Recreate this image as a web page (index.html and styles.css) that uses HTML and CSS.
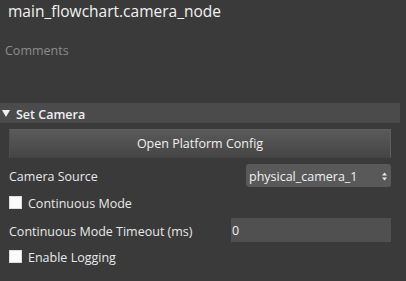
FILE: index.html
```html
<!DOCTYPE html>
<html>
<head>
<meta charset="utf-8">
<link rel="stylesheet" href="styles.css">
</head>
<body>
<div class="panel">
  <div class="title">main_flowchart.camera_node</div>
  <div class="comments">Comments</div>
  <div class="section-head"><span class="tri"></span><span class="section-name">Set Camera</span></div>
  <div class="section-body">
    <button class="btn">Open Platform Config</button>
    <div class="row row-source">
      <span class="label">Camera Source</span>
      <div class="select">
        <span class="select-text">physical_camera_1</span>
        <svg class="spin" width="5" height="9" viewBox="0 0 5 9"><path d="M2.5 0.5 L5 3.5 L0 3.5 Z M0 5.5 L5 5.5 L2.5 8.5 Z" fill="#e8e8e8"/></svg>
      </div>
    </div>
    <div class="row row-check">
      <span class="check"></span><span class="label">Continuous Mode</span>
    </div>
    <div class="row row-timeout">
      <span class="label">Continuous Mode Timeout (ms)</span>
      <div class="input">0</div>
    </div>
    <div class="row row-check2">
      <span class="check"></span><span class="label">Enable Logging</span>
    </div>
  </div>
</div>
</body>
</html>
```
FILE: styles.css
```css
html, body {
  margin: 0;
  padding: 0;
  background: #3a3a3a;
  width: 406px;
  height: 281px;
  overflow: hidden;
}
.panel {
  font-family: "Open Sans", "Noto Sans", sans-serif;
  color: #e8e8e8;
}
.title {
  font-size: 15.5px;
  line-height: 22px;
  height: 22px;
  padding-left: 8px;
  color: #f2f2f2;
}
.comments {
  margin-top: 20px;
  font-size: 12.5px;
  line-height: 18px;
  height: 18px;
  padding-left: 5px;
  color: #8c8c8c;
}
.section-head {
  margin-top: 43px;
  width: 400px;
  height: 20px;
  background: #4b4b4b;
  display: flex;
  align-items: center;
}
.tri {
  width: 0;
  height: 0;
  margin-left: 2px;
  margin-right: 6px;
  border-left: 4px solid transparent;
  border-right: 4px solid transparent;
  border-top: 7px solid #f0f0f0;
}
.section-name {
  font-size: 12.5px;
  font-weight: 600;
  line-height: 18px;
  padding-top: 3px;
  color: #f0f0f0;
}
.section-body {
  padding: 0 15px 0 9px;
}
.btn {
  display: block;
  margin-top: 6px;
  width: 382px;
  height: 29px;
  border: 1px solid #5e5e5e;
  border-bottom-color: #444;
  border-left-color: #4e4e4e;
  background: linear-gradient(#5a5a5a, #4f4f4f 55%, #454545);
  color: #f0f0f0;
  font-family: "Open Sans", "Noto Sans", sans-serif;
  font-size: 12.5px;
  padding: 1px 0 0;
  line-height: 26px;
}
.row {
  display: flex;
  align-items: center;
  font-size: 12.5px;
}
.label {
  line-height: 18px;
  padding-top: 3px;
}
.row-source {
  margin-top: 6px;
  height: 23px;
  justify-content: space-between;
}
.select {
  width: 145px;
  height: 23px;
  background: #595959;
  border-radius: 3px;
  display: flex;
  align-items: center;
  justify-content: space-between;
  box-sizing: border-box;
  padding: 1px 4px 0 3px;
  color: #f0f0f0;
}
.spin {
  display: block;
}
.row-check {
  margin-top: 4px;
  height: 23px;
}
.check {
  width: 13px;
  height: 13px;
  box-sizing: border-box;
  background: #fbfbfb;
  border: 1px solid #dcdcdc;
  margin-right: 6px;
  flex: none;
}
.row-timeout {
  margin-top: 4px;
  height: 24px;
  justify-content: space-between;
}
.input {
  width: 160px;
  height: 24px;
  background: #505050;
  box-sizing: border-box;
  padding: 2px 0 0 1px;
  line-height: 22px;
  color: #f0f0f0;
}
.row-check2 {
  margin-top: 3px;
  height: 23px;
}
```
